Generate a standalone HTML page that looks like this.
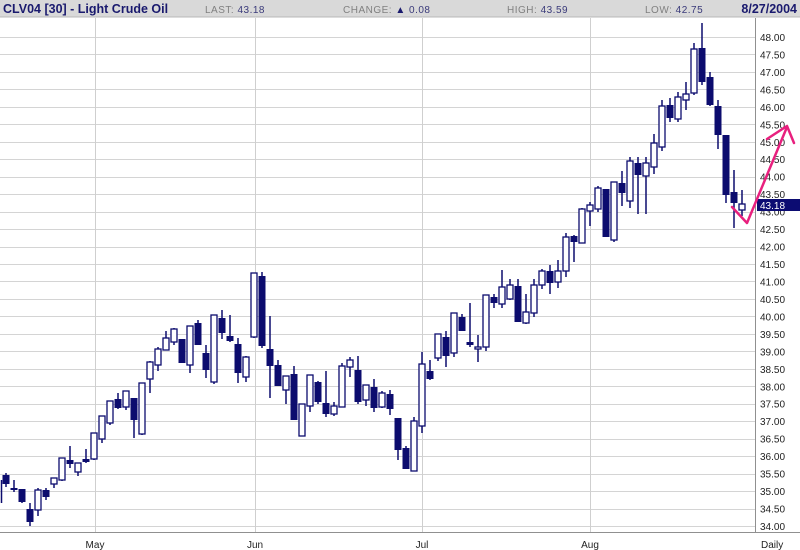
<!DOCTYPE html>
<html><head><meta charset="utf-8"><style>
html,body{margin:0;padding:0;background:#fff;width:800px;height:550px;overflow:hidden}
svg{display:block}
text{font-family:"Liberation Sans",Arial,sans-serif}
</style></head><body>
<svg id="s" width="800" height="550" xmlns="http://www.w3.org/2000/svg">
<rect x="0" y="0" width="800" height="17" fill="#d9d9d9"/>
<line x1="0" y1="17" x2="800" y2="17" stroke="#b8b8b8"/>
<text x="3" y="13" font-size="12.5" font-weight="bold" fill="#1a1a6e">CLV04 [30] - Light Crude Oil</text>
<text x="205" y="13" font-size="10" fill="#808080" letter-spacing="0.5">LAST: <tspan fill="#3a3a7a">43.18</tspan></text>
<text x="343" y="13" font-size="10" fill="#808080" letter-spacing="0.5">CHANGE: <tspan fill="#1a1a6e">▲</tspan> <tspan fill="#3a3a7a">0.08</tspan></text>
<text x="507" y="13" font-size="10" fill="#808080" letter-spacing="0.5">HIGH: <tspan fill="#3a3a7a">43.59</tspan></text>
<text x="645" y="13" font-size="10" fill="#808080" letter-spacing="0.5">LOW: <tspan fill="#3a3a7a">42.75</tspan></text>
<text x="797" y="13" font-size="12.5" font-weight="bold" fill="#1a1a6e" text-anchor="end">8/27/2004</text>
<g id="grid" stroke="#d4d4d4" stroke-width="1"></g>
<g stroke="#cfcfcf"><line x1="95.5" y1="18" x2="95.5" y2="532"/><line x1="255.5" y1="18" x2="255.5" y2="532"/><line x1="422.5" y1="18" x2="422.5" y2="532"/><line x1="590.5" y1="18" x2="590.5" y2="532"/></g>
<line x1="755.5" y1="18" x2="755.5" y2="533" stroke="#909090"/>
<line x1="0" y1="532.5" x2="800" y2="532.5" stroke="#909090"/>
<g id="c"></g>
<g font-size="10" fill="#222">
<text x="760" y="41">48.00</text><text x="760" y="58.5">47.50</text><text x="760" y="76">47.00</text><text x="760" y="93.5">46.50</text><text x="760" y="111">46.00</text><text x="760" y="128.3">45.50</text><text x="760" y="145.8">45.00</text><text x="760" y="163.2">44.50</text><text x="760" y="180.7">44.00</text><text x="760" y="198.2">43.50</text><text x="760" y="215.6">43.00</text><text x="760" y="233.1">42.50</text><text x="760" y="250.6">42.00</text><text x="760" y="268">41.50</text><text x="760" y="285.5">41.00</text><text x="760" y="303">40.50</text><text x="760" y="320.4">40.00</text><text x="760" y="337.9">39.50</text><text x="760" y="355.4">39.00</text><text x="760" y="372.8">38.50</text><text x="760" y="390.3">38.00</text><text x="760" y="407.7">37.50</text><text x="760" y="425.2">37.00</text><text x="760" y="442.7">36.50</text><text x="760" y="460.1">36.00</text><text x="760" y="477.6">35.50</text><text x="760" y="495.1">35.00</text><text x="760" y="512.5">34.50</text><text x="760" y="530">34.00</text>
</g>
<rect x="757" y="199" width="43" height="12" fill="#0c0c72"/>
<text x="760" y="209" font-size="10" fill="#fff">43.18</text>
<g font-size="10" fill="#222" text-anchor="middle">
<text x="95" y="548">May</text><text x="255" y="548">Jun</text><text x="422" y="548">Jul</text><text x="590" y="548">Aug</text>
</g>
<text x="761" y="548" font-size="10" fill="#222">Daily</text>
<g fill="none" stroke="#e8207e" stroke-width="2.5" stroke-linecap="round" stroke-linejoin="round">
<polyline points="732,207 747,223 787,127"/>
<polyline points="767,139 787,126 794,143"/>
</g>
</svg>
<script>
var g=document.getElementById('grid'),ns="http://www.w3.org/2000/svg",h='';
for(var i=0;i<=28;i++){var y=Math.round(37+i*17.464)+0.5;h+='<line x1="0" y1="'+y+'" x2="755" y2="'+y+'"/>';}
g.innerHTML=h;
var d=[[6,473,487,475,484,1],[14,480,492,488,490,1],[22,489,503,489,502,1],[30,503,526,509,522,1],[38,488,516,490,510,0],[46,488,500,490,497,1],[54,478,488,478,484,0],[62,458,481,458,480,0],[70,446,468,460,464,1],[78,463,476,463,472,0],[86,449,463,459,462,1],[94,433,460,433,459,0],[102,416,443,416,439,0],[110,401,425,401,423,0],[118,393,409,399,408,1],[126,391,410,391,407,0],[134,398,438,398,420,1],[142,383,435,383,434,0],[150,361,393,362,379,0],[158,347,371,349,365,0],[166,331,348,338,350,0],[174,328,345,329,342,0],[182,339,363,339,363,1],[190,326,373,326,365,0],[198,320,345,323,345,1],[206,345,378,353,370,1],[214,315,384,315,382,0],[222,310,339,318,333,1],[230,315,342,336,341,1],[238,338,383,344,373,1],[246,356,382,357,377,0],[254,273,338,273,337,0],[262,272,348,276,346,1],[270,316,398,349,366,1],[278,360,386,365,386,1],[286,376,404,376,390,0],[294,366,420,374,420,1],[302,404,436,404,436,0],[310,375,412,375,406,0],[318,381,404,382,402,1],[326,371,417,403,414,1],[334,402,416,406,414,0],[342,363,407,366,407,0],[350,357,377,360,367,0],[358,356,404,370,402,1],[366,385,406,385,400,0],[374,379,412,387,408,1],[382,391,408,393,407,0],[390,390,415,394,409,1],[398,418,460,418,450,1],[406,446,469,448,469,1],[414,417,471,421,471,0],[422,352,433,364,426,0],[430,360,380,371,379,1],[438,334,361,334,358,0],[446,331,367,337,356,1],[454,313,357,313,353,0],[462,314,331,317,331,1],[470,303,347,342,345,1],[478,335,362,347,349,0],[486,295,351,295,347,0],[494,294,308,297,303,1],[502,270,308,287,304,0],[510,279,300,285,299,0],[518,279,322,286,322,1],[526,294,324,312,323,0],[534,279,317,285,313,0],[542,269,289,271,285,0],[550,265,294,271,283,1],[558,260,288,271,282,0],[566,233,277,237,271,0],[574,235,262,236,242,1],[582,208,243,209,243,0],[590,202,226,205,211,0],[598,186,212,188,209,0],[606,189,237,189,237,1],[614,182,242,182,240,0],[622,171,206,183,193,1],[630,157,208,161,201,0],[638,157,214,163,175,1],[646,157,214,163,176,0],[654,134,174,143,167,0],[662,100,151,106,147,0],[670,98,122,105,118,1],[678,92,122,97,119,0],[686,82,110,94,100,0],[694,43,95,49,93,0],[702,23,85,48,82,1],[710,72,106,77,105,1],[718,100,149,106,135,1],[726,135,203,135,195,1],[734,170,228,192,203,1],[742,190,216,204,210,0]];
var s='<line x1="1.5" y1="480" x2="1.5" y2="503" stroke="#0c0c6e" stroke-width="1.5"/>';
d.forEach(function(c){var x=c[0];s+='<line x1="'+x+'" y1="'+c[1]+'" x2="'+x+'" y2="'+c[2]+'" stroke="#0c0c6e" stroke-width="1.5"/>';
var hgt=Math.max(c[4]-c[3],2);
if(c[5])s+='<rect x="'+(x-3.5)+'" y="'+c[3]+'" width="7" height="'+hgt+'" fill="#0c0c6e"/>';
else s+='<rect x="'+(x-3)+'" y="'+c[3]+'" width="6" height="'+hgt+'" fill="#fff" stroke="#0c0c6e" stroke-width="1.3"/>';});
document.getElementById('c').innerHTML=s;
</script>
</body></html>
